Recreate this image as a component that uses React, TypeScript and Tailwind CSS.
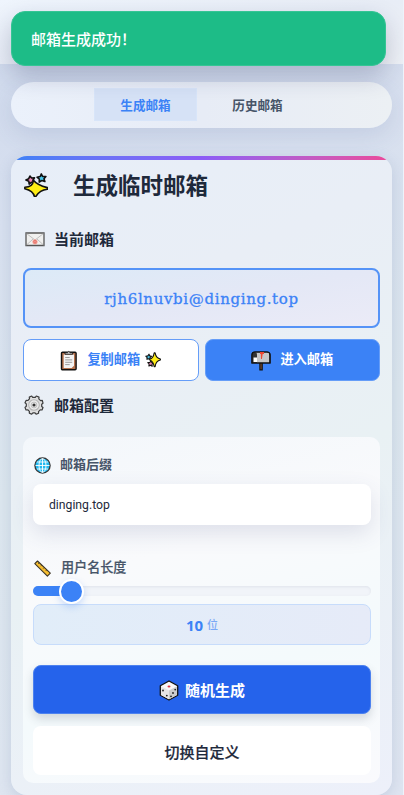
import React from 'react';

function Sparkles({ className = '' }: { className?: string }) {
  return (
    <svg viewBox="0 0 25 25" className={className} stroke="#111" strokeWidth="1.700" strokeLinejoin="round">
      <path d="M6.200 3.200l1.700 2 3-.2-1.600 2.600 1.200 2.700-2.900-.6L5.400 11.500 5 8.600 2 7.200l2.900-1.300z" fill="#ef87b5" />
      <path d="M18 1l1.300 2.500 3.500.1-2 2.400.9 2.900-3.100-1-2.700 1.500.1-3.100-2.400-1.900 3.300-.7z" fill="#48c7ec" />
      <path d="M9.800 7.500Q13.500 12.300 24.300 15.200v1.700Q16.500 17.500 12.200 24.600h-1.300Q9.700 18.600.9 16.400v-1.500Q9.300 14.600 9.800 7.500z" fill="#ffed16" />
    </svg>
  );
}

function SmallSparkles() {
  return (
    <svg viewBox="0 0 16 16" className="h-4 w-4 shrink-0" stroke="#111" strokeWidth="1.100" strokeLinejoin="round">
      <path d="M4 2.200l.8 1.700 1.700.5-1.500 1.300.2 1.900-1.600-.9-1.700.6.2-1.800L.8 4.200l2-.3z" fill="#48c7ec" />
      <path d="M6 8.800l.8 1.700 1.700.4-1.500 1.300.2 2-1.700-1-1.600.8.2-2-1.300-1.400 2-.1z" fill="#ef87b5" />
      <path d="M9.200.8h.9q1 5.300 5.300 6.200v1q-4.600 1-5.300 6.700h-.9Q8.300 9.200 4.800 8V7Q8.300 6.300 9.200.8z" fill="#ffed16" />
    </svg>
  );
}

function Envelope() {
  return (
    <svg viewBox="0 0 20 15" className="h-[15px] w-5 shrink-0">
      <path d="M1 1h18v12.500H1z" fill="#f0f0ef" stroke="#555" strokeWidth="1.300" />
      <path d="M1.500 1.500L10 8l8.500-6.500M1.500 13L8 7M18.500 13L12 7" fill="none" stroke="#aaa" strokeWidth=".7" />
      <circle cx="10" cy="9.800" r="2.600" fill="#f2a49c" />
      <circle cx="10" cy="9.800" r="1.300" fill="none" stroke="#e25a50" strokeWidth=".7" />
    </svg>
  );
}

function Clipboard() {
  return (
    <svg viewBox="0 0 18 21" className="h-[21px] w-[18px] shrink-0">
      <rect x="1.500" y="2.200" width="14.600" height="17.500" rx="1" fill="#b5714d" stroke="#111" strokeWidth="1.400" />
      <path d="M3.700 4.500h10.300v11.300l-2.300 2.200h-8z" fill="#f4f4f4" />
      <path d="M5.200 7.500h4.500m-4.500 2.400h7M5.200 12.300h7M5.200 14.600h4.500" stroke="#888" strokeWidth=".8" />
      <path d="M5 4.300V2.700h2.500Q8.800.2 10.100 2.700h2.500v1.600z" fill="#c9c9c9" stroke="#111" strokeWidth=".8" />
    </svg>
  );
}

function Mailbox() {
  return (
    <svg viewBox="0 0 20 21" className="h-[21px] w-5 shrink-0" stroke="#111" strokeWidth="1.200">
      <path d="M8.900 12h2.300v7.800H8.900z" fill="#86502f" />
      <path d="M4 2h12q3 0 3 3v8H1V5q0-3 3-3z" fill="#c8c8c8" />
      <path d="M1 13V5q0-3 2.500-3Q6 2 6 5v8z" fill="#333" stroke="none" />
      <path d="M2.500 7.500H6v4.500H2.500z" fill="#fff" stroke="none" />
      <path d="M1 13V5q0-3 3-3h12q3 0 3 3v8z" fill="none" />
      <path d="M9 2h4v2h-1.300L10.900 9H10L9.800 4H9z" fill="#ee4931" stroke="none" />
    </svg>
  );
}

function Gear() {
  return (
    <svg viewBox="0 0 20 20" className="h-5 w-5 shrink-0">
      <path d="M7.700 1l1 1.400h2.600l1-1.400 2.700 1.100-.2 1.800 1.800 1.700 1.700-.2L19 8.200l-1.300 1v2.300l1.300 1-1 2.500-1.800-.1-1.700 1.700.1 1.600-2.500 1-1.100-1.300H8.900l-1.200 1.300-2.400-1.100.1-1.700-1.700-1.600-1.700.2-1-2.600 1.300-1.200V8.900L1 7.800l1.100-2.400 1.700.1 1.700-1.600-.2-1.800z" fill="#dfdfdf" stroke="#3d3d3d" strokeWidth="1.200" strokeLinejoin="round" />
      <circle cx="10" cy="10" r="5.300" fill="#ececec" stroke="#b5b5b5" strokeWidth="1.100" />
      <circle cx="10" cy="10" r="2.900" fill="none" stroke="#aaa" strokeWidth=".7" />
      <circle cx="10" cy="10" r="1.600" fill="#333" />
    </svg>
  );
}

function Globe() {
  return (
    <svg viewBox="0 0 17 17" className="h-[17px] w-[17px] shrink-0">
      <circle cx="8.500" cy="8.500" r="7.600" fill="#22b9ef" stroke="#343434" strokeWidth="1.300" />
      <path d="M8.500 1.500v14M1.500 8.500h14M2.800 5h11.400M2.800 12h11.400" stroke="#fff" strokeWidth=".9" />
      <ellipse cx="8.500" cy="8.500" rx="3.500" ry="6.900" fill="none" stroke="#fff" strokeWidth=".9" />
    </svg>
  );
}

function Ruler() {
  return (
    <svg viewBox="0 0 17 17" className="h-[17px] w-[17px] shrink-0">
      <path d="M3.500 1l12.800 12.200-2.900 2.900L.8 3.600z" fill="#f6bd2f" stroke="#3b3527" strokeWidth="1.100" strokeLinejoin="round" />
      <path d="M5 3L4.200 3.900M7.500 5.300L6.700 6.200M10 7.700L9.200 8.600M12.500 10.100L11.700 11" stroke="#3b3527" strokeWidth=".8" />
    </svg>
  );
}

function Die() {
  return (
    <svg viewBox="0 0 20 21" className="h-[21px] w-5 shrink-0">
      <path d="M10 1l8.700 4.800v9.500L10 20l-8.700-4.700V5.800z" fill="#f8f8f8" stroke="#111" strokeWidth="1.300" strokeLinejoin="round" />
      <path d="M10 10.500l8-4.200v8.600L10 19.200z" fill="#ccc" />
      <path d="M2 6.300l8 4.200v8.700l-8-4.300z" fill="#e5e5e5" />
      <ellipse cx="10" cy="6.500" rx="1.500" ry="1" fill="#da3340" />
      <g fill="#222"><circle cx="4" cy="10.500" r=".9" /><circle cx="7.800" cy="15.600" r=".9" /><circle cx="16.200" cy="9.600" r=".9" /><circle cx="14" cy="13" r=".9" /><circle cx="12" cy="16.300" r=".9" /></g>
    </svg>
  );
}

export default function App() {
  return (
    <div className="relative h-[795px] w-[404px] overflow-hidden border-r border-[#edf3fb] bg-[linear-gradient(165deg,#cdd8ec_0%,#d8e0ef_25%,#dce6ee_55%,#dfe5f1_100%)] font-['Noto_Sans','Noto_Sans_CJK_SC',sans-serif] text-[#1e293b]">
      <header className="h-16 bg-linear-to-br from-[#eff5fd] via-[#e8edf6] to-[#eef1f6]" />
      <div role="status" className="absolute top-[11px] left-[11px] flex h-[55px] w-[375px] items-center rounded-[14px] border border-[#35c594] bg-[#1dbc87] px-[19px] text-[15px] leading-6 font-medium text-white shadow-[0_10px_24px_rgba(30,41,80,0.23)]">
        邮箱生成成功！
      </div>
      <nav className="mt-[18px] ml-[11px] flex h-[45.500px] w-[381px] items-center rounded-[23px] bg-linear-to-r from-[#ebf1fb] via-[#e7ecf6] to-[#ecf0f4] pl-[83px] text-[12.600px] font-bold shadow-[0_8px_24px_rgba(70,90,150,0.14)]">
        <button className="h-[33px] w-[103px] border border-[#d8e5f9] bg-[#d6e2f6] pt-[3px] text-[#3b82f6]">生成邮箱</button>
        <button className="ml-[9px] h-[33px] w-[103px] pt-[3px] text-[#475569]">历史邮箱</button>
      </nav>
      <main className="mt-[28.500px] ml-[11px] h-[639px] w-[381px] overflow-hidden rounded-2xl bg-[linear-gradient(155deg,#e7eef8_0%,#e9eef6_25%,#e9f1f4_55%,#edf0fa_100%)] shadow-[0_3px_14px_rgba(80,105,155,0.19)]">
        <div className="h-1 bg-linear-to-r from-[#3b82f6] via-[#8b5cf6] to-[#ec4899]" />
        <div className="px-3">
          <h1 className="flex h-[52px] items-center pl-px text-[22.500px] font-bold"><Sparkles className="mr-[25px] mb-[3px] h-6 w-6" />生成临时邮箱</h1>
          <h2 className="mt-[15px] flex h-6 items-center pl-0.5 text-[15px] font-bold"><Envelope /><span className="ml-[9px]">当前邮箱</span></h2>
          <div className="mt-[17px] flex h-[60px] w-[357px] items-center justify-center rounded-lg border-2 border-[#5593f7] bg-linear-to-br from-[#dceaf7] via-[#e4e8f6] to-[#ebebf7] pt-0.5 font-['DejaVu_Serif',serif] text-[15px] tracking-[0.650px] text-[#3b82f6] [-webkit-text-stroke:0.300px_#3b82f6]">rjh6lnuvbi@dinging.top</div>
          <div className="mt-[11px] grid w-[357px] grid-cols-2 gap-[6px] text-[13.200px] font-bold">
            <button className="flex h-[41.500px] items-center justify-center rounded-lg border border-[#659df8] bg-white pt-px text-[#3b82f6]"><Clipboard /><span className="mr-[5px] ml-[9px]">复制邮箱</span><SmallSparkles /></button>
            <button className="flex h-[41.500px] items-center justify-center rounded-lg border border-[#659df8] bg-[#3b82f6] pt-px text-white"><Mailbox /><span className="ml-[9px]">进入邮箱</span></button>
          </div>
          <h2 className="mt-[12.500px] flex h-6 items-center pl-px text-[15px] font-bold"><Gear /><span className="ml-2.5">邮箱配置</span></h2>
          <section className="mt-5 h-[346px] w-[357px] rounded-[10px] bg-[linear-gradient(165deg,#f3f7fb_0%,#f9fafc_35%,#f4fafc_66%,#fafafd_100%)] px-2.5 pt-[18px]">
            <label className="flex h-5 items-center pl-px text-[13px] font-semibold text-[#475569]"><Globe /><span className="ml-[9px]">邮箱后缀</span></label>
            <div className="mt-[9px] flex h-[41px] w-[338px] items-center rounded-lg bg-white px-4 pt-0.5 font-['Roboto',sans-serif] text-[12.200px] shadow-[0_8px_22px_rgba(65,75,125,0.15)]">dinging.top</div>
            <label className="mt-[33px] flex h-5 items-center pl-px text-[13.100px] font-medium text-[#475569] [-webkit-text-stroke:0.200px_#475569]"><Ruler /><span className="ml-2.5">用户名长度</span></label>
            <div className="relative mt-[8px] h-2.5 w-[338px] rounded-full bg-[#f1f4f9] shadow-[inset_0_1px_3px_rgba(80,90,120,0.10)]">
              <div className="h-2.5 w-9 rounded-full bg-[#3b82f6]" />
              <div className="absolute -top-[7px] left-[26px] h-[25px] w-[25px] rounded-full border-2 border-white bg-[#3b82f6] shadow-[0_3px_7px_rgba(59,130,246,0.25)]" />
            </div>
            <div className="mt-[7.500px] flex h-[41px] w-[338px] items-center justify-center rounded-lg border border-[#c7dcfb] bg-linear-to-r from-[#e1edf9] to-[#e6ebf8] pt-0.5 text-[15px] font-bold text-[#3b82f6]">10<span className="ml-1 text-[11px] font-medium text-[#79a9f6]">位</span></div>
            <button className="mt-[20.500px] flex h-[49px] w-[338px] items-center justify-center rounded-lg border border-[#4d82ef] bg-[#2563eb] pt-0.5 text-[15px] font-bold text-white shadow-[0_5px_10px_rgba(50,60,80,0.18)]"><Die /><span className="ml-1.5">随机生成</span></button>
            <button className="mt-3 h-[49px] w-[338px] rounded-lg bg-white pt-1 text-[15px] font-medium [-webkit-text-stroke:0.200px_#1e293b]">切换自定义</button>
          </section>
        </div>
      </main>
    </div>
  );
}
